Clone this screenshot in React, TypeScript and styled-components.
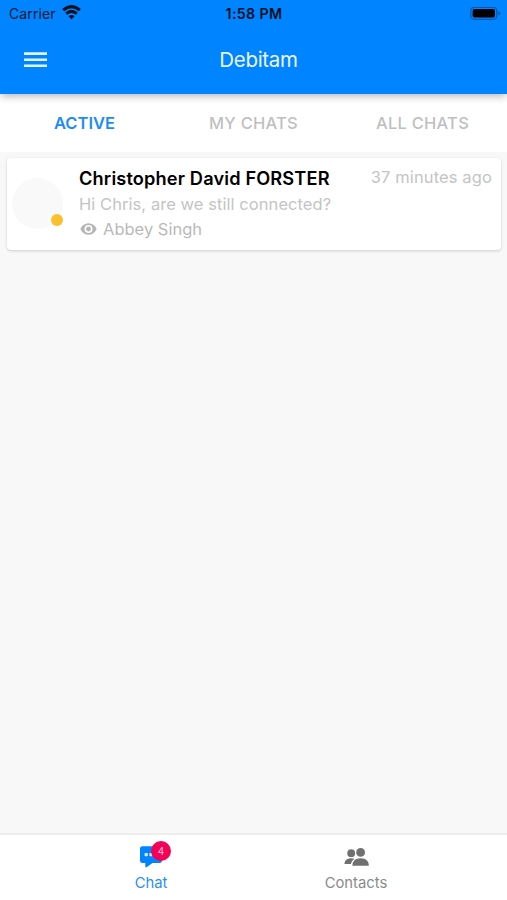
import React from "react";
import styled, { createGlobalStyle } from "styled-components";

const GlobalStyle = createGlobalStyle`
  * { box-sizing: border-box; }
  body { margin: 0; background: #f8f8f8; font-family: Inter, "Liberation Sans", sans-serif; }
`;

const Screen = styled.div`
  display: flex;
  flex-direction: column;
  width: 100%;
  height: 100vh;
  overflow: hidden;
  background: #f8f8f8;
`;

const Header = styled.header`
  position: relative;
  z-index: 1;
  flex: none;
  height: 94px;
  background: #0084ff;
  box-shadow: 0 3px 8px -1px rgba(0, 0, 0, 0.3);
`;

const StatusBar = styled.div`
  display: grid;
  grid-template-columns: 1fr auto 1fr;
  align-items: center;
  height: 27px;
  padding: 0 6px 0 9px;
  color: #06182c;
  font-size: 14px;
  line-height: 27px;
`;

const Carrier = styled.div`
  display: flex;
  align-items: center;
  gap: 6px;
  letter-spacing: 0.12px;

  svg {
    margin-bottom: 2px;
  }
`;

const Clock = styled.div`
  margin: 0 2px 0 0;
  color: #03101e;
  font-size: 14.2px;
  font-weight: 600;
  letter-spacing: 0.35px;
`;

const BatterySlot = styled.div`
  display: flex;
  justify-content: flex-end;
`;

const TitleBar = styled.div`
  display: grid;
  grid-template-columns: 1fr auto 1fr;
  align-items: center;
  height: 66px;
  padding: 0 24px;
`;

const MenuButton = styled.button`
  display: flex;
  width: 23px;
  padding: 0;
  border: 0;
  background: none;
`;

const Title = styled.h1`
  margin: 0 0 0 10px;
  color: #e9f6ff;
  font-size: 20.5px;
  font-weight: 400;
  letter-spacing: -0.28px;
  line-height: 26px;
`;

const Tabs = styled.nav`
  display: grid;
  flex: none;
  grid-template-columns: repeat(3, 1fr);
  height: 58px;
  background: #fff;
`;

const Tab = styled.button<{ $active?: boolean }>`
  padding: 0;
  border: 0;
  background: none;
  color: ${(p) => (p.$active ? "#1c8df5" : "#bfbfbf")};
  font-family: inherit;
  font-size: 16.5px;
  font-weight: ${(p) => (p.$active ? 600 : 500)};
  letter-spacing: ${(p) => (p.$active ? "0" : "0.25px")};
  line-height: 58px;
`;

const List = styled.main`
  flex: 1;
  padding: 6px 6px 0 7px;
`;

const ChatCard = styled.article`
  display: flex;
  height: 92px;
  padding: 7px 9px 0 5px;
  border-radius: 4px;
  background: #fff;
  box-shadow: 0 1px 3px rgba(0, 0, 0, 0.17);
`;

const Avatar = styled.div`
  position: relative;
  flex: none;
  width: 51px;
  height: 51px;
  margin: 13px 16px 0 0;
  border-radius: 50%;
  background: #f9f9f9;
`;

const Presence = styled.span`
  position: absolute;
  right: 0;
  bottom: 3px;
  width: 12px;
  height: 12px;
  border-radius: 50%;
  background: #fbc02d;
`;

const ChatBody = styled.div`
  flex: 1;
  min-width: 0;
`;

const ChatTop = styled.div`
  display: flex;
  justify-content: space-between;
  height: 27px;
  line-height: 26px;
`;

const Name = styled.h2`
  margin: 0;
  color: #000;
  font-size: 18.2px;
  font-weight: 600;
  letter-spacing: 0.15px;
  white-space: nowrap;
`;

const Time = styled.time`
  color: #c4c4c4;
  font-size: 16.5px;
  letter-spacing: 0.12px;
  line-height: 25px;
  white-space: nowrap;
`;

const Message = styled.p`
  margin: 0;
  color: #c4c4c4;
  font-size: 16.5px;
  letter-spacing: 0.06px;
  line-height: 25px;
`;

const Watcher = styled.div`
  display: flex;
  align-items: center;
  gap: 6px;
  padding-left: 1px;
  color: #b9b9b9;
  font-size: 16.5px;
  line-height: 24px;
`;

const BottomNav = styled.nav`
  display: flex;
  flex: none;
  justify-content: center;
  height: 67px;
  border-top: 2px solid #ededed;
  background: #fff;
`;

const NavItem = styled.button<{ $active?: boolean }>`
  display: flex;
  flex-direction: column;
  align-items: center;
  width: 205px;
  padding: 10px 0 0;
  border: 0;
  background: none;
  font-family: inherit;
`;

const NavIcon = styled.span`
  position: relative;
  display: flex;
  height: 27px;
`;

const NavLabel = styled.span<{ $active?: boolean }>`
  color: ${(p) => (p.$active ? "#2a91f2" : "#8b8b8b")};
  font-size: 14.8px;
  line-height: 22px;
`;

const Badge = styled.span`
  position: absolute;
  top: -4px;
  right: -8px;
  width: 20px;
  height: 20px;
  border-radius: 50%;
  background: #f50057;
  color: #ffc4dc;
  font-size: 10px;
  line-height: 20px;
  text-align: center;
`;

const WifiIcon = () => (
  <svg width="19" height="15" viewBox="0 0 19 15" fill="none" stroke="#06111e" strokeWidth="3">
    <path d="M1.2 5.2Q9.5 -2 17.8 5.2" />
    <path d="M4.2 8.7Q9.5 4.1 14.8 8.7" />
    <path d="M6.5 11.3Q9.5 8.9 12.5 11.3L9.5 14.3Z" fill="#06111e" stroke="none" />
  </svg>
);

const BatteryIcon = () => (
  <svg width="31" height="14" viewBox="0 0 31 14">
    <rect x="0.8" y="0.3" width="26" height="12" rx="3.5" fill="none" stroke="#0659a8" strokeWidth="1.3" />
    <rect x="2.6" y="2.1" width="22.4" height="8.4" rx="1.8" fill="#000" />
    <path d="M28.4 4.3Q30.3 5 30.3 6.3Q30.3 7.6 28.4 8.3Z" fill="#0659a8" />
  </svg>
);

const MenuIcon = () => (
  <svg width="23" height="16" viewBox="0 0 23 16" fill="#e4f4ff">
    <path d="M0 .3h23v2.6H0zM0 6.4h23v2.6H0zM0 12.5h23v2.6H0z" />
  </svg>
);

const EyeIcon = () => (
  <svg width="17" height="12" viewBox="0 0 17 12">
    <path d="M0.3 6C2 2.3 4.9.2 8.5.2S15 2.3 16.7 6C15 9.7 12.1 11.8 8.5 11.8S2 9.7.3 6Z" fill="#b5b5b5" />
    <circle cx="8.5" cy="6" r="4" fill="#fff" />
    <circle cx="8.5" cy="6" r="2.4" fill="#b5b5b5" />
  </svg>
);

const ChatIcon = () => (
  <svg width="24" height="24" viewBox="0 0 24 24">
    <path d="M3.4 1.2h17.2Q23 1.2 23 3.6v12.1Q23 18.1 20.6 18.1H13.5l-5.6 4Q6.3 22.8 6.3 21.4v-3.3H3.4Q1 18.1 1 15.7V3.6Q1 1.2 3.4 1.2Z" fill="#0084ff" />
    <g fill="#d9efff">
      <rect x="5.6" y="8" width="3.2" height="3.2" rx="0.7" />
      <rect x="10.4" y="8" width="3.2" height="3.2" rx="0.7" />
      <rect x="15.2" y="8" width="3.2" height="3.2" rx="0.7" />
    </g>
  </svg>
);

const ContactsIcon = () => (
  <svg width="25" height="24" viewBox="0 0 25 24" fill="#707070">
    <circle cx="7.2" cy="8.2" r="3.9" />
    <circle cx="16.6" cy="7.4" r="4.4" />
    <path d="M.5 19C.5 15.3 3.5 13.2 7.2 13.2q1.8 0 3.2.5Q7.4 15.7 6.9 19Z" />
    <path d="M8.4 20.8C8.4 16 11.4 13.3 16.6 13.3s8.2 2.7 8.2 7.5Z" />
  </svg>
);

export default function App() {
  return (
    <Screen>
      <GlobalStyle />
      <Header>
        <StatusBar>
          <Carrier>Carrier <WifiIcon /></Carrier>
          <Clock>1:58 PM</Clock>
          <BatterySlot><BatteryIcon /></BatterySlot>
        </StatusBar>
        <TitleBar>
          <MenuButton aria-label="Menu"><MenuIcon /></MenuButton>
          <Title>Debitam</Title>
        </TitleBar>
      </Header>
      <Tabs>
        <Tab $active>ACTIVE</Tab>
        <Tab>MY CHATS</Tab>
        <Tab>ALL CHATS</Tab>
      </Tabs>
      <List>
        <ChatCard>
          <Avatar><Presence /></Avatar>
          <ChatBody>
            <ChatTop>
              <Name>Christopher David FORSTER</Name>
              <Time>37 minutes ago</Time>
            </ChatTop>
            <Message>Hi Chris, are we still connected?</Message>
            <Watcher><EyeIcon />Abbey Singh</Watcher>
          </ChatBody>
        </ChatCard>
      </List>
      <BottomNav>
        <NavItem $active>
          <NavIcon><ChatIcon /><Badge>4</Badge></NavIcon>
          <NavLabel $active>Chat</NavLabel>
        </NavItem>
        <NavItem>
          <NavIcon><ContactsIcon /></NavIcon>
          <NavLabel>Contacts</NavLabel>
        </NavItem>
      </BottomNav>
    </Screen>
  );
}
